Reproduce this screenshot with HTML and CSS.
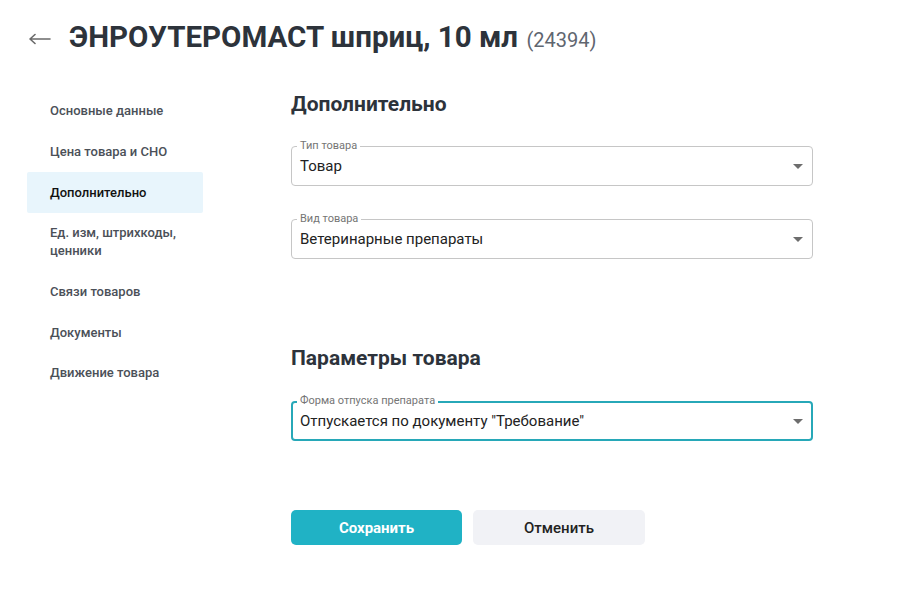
FILE: index.html
```html
<!DOCTYPE html>
<html lang="ru">
<head>
<meta charset="utf-8">
<title>ЭНРОУТЕРОМАСТ шприц, 10 мл</title>
<link rel="stylesheet" href="styles.css">
</head>
<body>
<header class="page-head">
  <button class="back" type="button" aria-label="Назад">
    <svg width="22" height="12" viewBox="0 0 22 12"><path d="M1 6H21M1 6L6 1.5M1 6L6 10.5" fill="none" stroke="#6a6a6a" stroke-width="1.6" stroke-linecap="round" stroke-linejoin="round"/></svg>
  </button>
  <h1 class="title">ЭНРОУТЕРОМАСТ шприц, 10 мл <span class="code">(24394)</span></h1>
</header>
<div class="layout">
  <nav class="side">
    <a class="nav-item">Основные данные</a>
    <a class="nav-item">Цена товара и СНО</a>
    <a class="nav-item active">Дополнительно</a>
    <a class="nav-item">Ед. изм, штрихкоды,<br>ценники</a>
    <a class="nav-item">Связи товаров</a>
    <a class="nav-item">Документы</a>
    <a class="nav-item">Движение товара</a>
  </nav>
  <main class="content">
    <h2 class="section-title">Дополнительно</h2>
    <div class="field">
      <span class="field-label">Тип товара</span>
      <span class="field-value">Товар</span>
      <span class="caret"></span>
    </div>
    <div class="field field-second">
      <span class="field-label">Вид товара</span>
      <span class="field-value">Ветеринарные препараты</span>
      <span class="caret"></span>
    </div>
    <h2 class="section-title section-two">Параметры товара</h2>
    <div class="field focused">
      <span class="field-label">Форма отпуска препарата</span>
      <span class="field-value">Отпускается по документу "Требование"</span>
      <span class="caret"></span>
    </div>
    <div class="actions">
      <button class="btn btn-primary" type="button">Сохранить</button>
      <button class="btn btn-secondary" type="button">Отменить</button>
    </div>
  </main>
</div>
</body>
</html>
```
FILE: styles.css
```css
* { box-sizing: border-box; }
html, body { margin: 0; padding: 0; background: #fff; }
body {
  font-family: Roboto, "Noto Sans", "Liberation Sans", sans-serif;
  color: #2d333b;
  width: 920px;
  height: 606px;
  overflow: hidden;
}
.page-head {
  display: flex;
  align-items: center;
  padding: 22px 0 0 29px;
  height: 54px;
}
.back {
  border: 0;
  background: none;
  padding: 0;
  width: 22px;
  height: 12px;
  display: flex;
  margin-right: 18px;
  margin-top: 2px;
}
.title {
  margin: 0;
  font-size: 29.5px;
  line-height: 32px;
  font-weight: 700;
  color: #2d333b;
  letter-spacing: 0;
}
.code {
  font-size: 20px;
  font-weight: 400;
  color: #5f6670;
  margin-left: 1px;
}
.layout {
  display: flex;
  padding-top: 36px;
}
.side {
  width: 176px;
  margin-left: 27px;
  padding-top: 1px;
  display: flex;
  flex-direction: column;
}
.nav-item {
  display: block;
  padding: 11.35px 23px;
  font-size: 13px;
  line-height: 18px;
  font-weight: 500;
  color: #4b5058;
  border-radius: 2px;
}
.nav-item.active {
  background: #e8f5fc;
  color: #111;
}
.content {
  margin-left: 88px;
  width: 522px;
  display: flex;
  flex-direction: column;
}
.section-title {
  margin: 1px 0 0;
  font-size: 21px;
  line-height: 26px;
  font-weight: 700;
  color: #2d333b;
}
.section-two { margin-top: 86px; }
.field {
  position: relative;
  height: 40px;
  margin-top: 29px;
  border: 1px solid #c6c6c6;
  border-radius: 4px;
  display: flex;
  align-items: center;
  padding: 0 9px 0 8px;
}
.field-second { margin-top: 33px; }
.field.focused {
  margin-top: 30px;
  border: 2px solid #27a8b8;
  padding-left: 7px;
  padding-right: 8px;
}
.field-label {
  position: absolute;
  top: -8px;
  left: 5px;
  padding: 0 3px;
  background: #fff;
  font-size: 11px;
  line-height: 14px;
  color: #757575;
}
.field.focused .field-label { left: 4px; top: -9px; }
.field-value {
  flex: 1;
  font-size: 15px;
  line-height: 20px;
  color: #222;
}
.caret {
  width: 0;
  height: 0;
  border-left: 5px solid transparent;
  border-right: 5px solid transparent;
  border-top: 5px solid #6d6d6d;
  margin-top: 1px;
}
.actions {
  display: flex;
  gap: 11px;
  margin-top: 69px;
}
.btn {
  width: 171px;
  height: 35px;
  border: 0;
  border-radius: 5px;
  font-family: inherit;
  font-size: 15px;
  cursor: pointer;
}
.btn-primary {
  background: #20b2c5;
  color: #fff;
  font-weight: 700;
}
.btn-secondary {
  background: #f1f2f6;
  color: #222;
  font-weight: 500;
  width: 172px;
}
```
